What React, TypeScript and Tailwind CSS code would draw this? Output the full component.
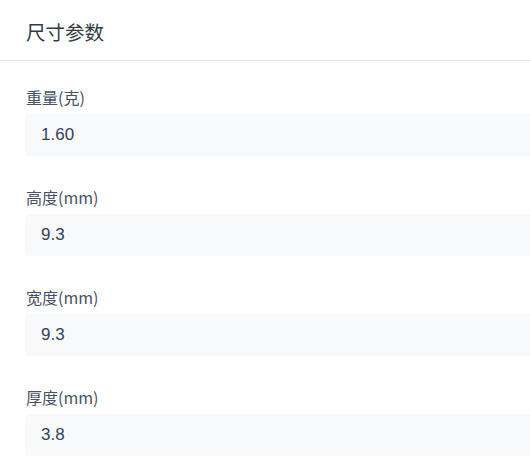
const fields = [
  { label: "重量(克)", value: "1.60" },
  { label: "高度(mm)", value: "9.3" },
  { label: "宽度(mm)", value: "9.3" },
  { label: "厚度(mm)", value: "3.8" },
];

export default function App() {
  return (
    <div className="w-[530px] h-[475px] overflow-hidden bg-white font-['Noto_Sans_CJK_SC','Noto_Sans',sans-serif]">
      {/* Section header */}
      <div className="h-[61px] flex items-center pt-1 px-[26px] border-b border-[#e6e8eb]">
        <h2 className="text-[19.5px] text-[#333a45]">尺寸参数</h2>
      </div>

      {/* Fields */}
      <div className="w-[560px] pl-[25px] pt-[25px] flex flex-col gap-[30px]">
        {fields.map((f) => (
          <div key={f.label} className="flex flex-col">
            <label className="h-[22px] leading-[22px] text-[16px] text-[#465066] pl-px">{f.label}</label>
            <div className="mt-1.5 h-[42px] flex items-center px-4 rounded bg-[#f8f9fb] text-[17px] text-[#34405a] font-['Liberation_Sans',sans-serif]">
              {f.value}
            </div>
          </div>
        ))}
      </div>
    </div>
  );
}
